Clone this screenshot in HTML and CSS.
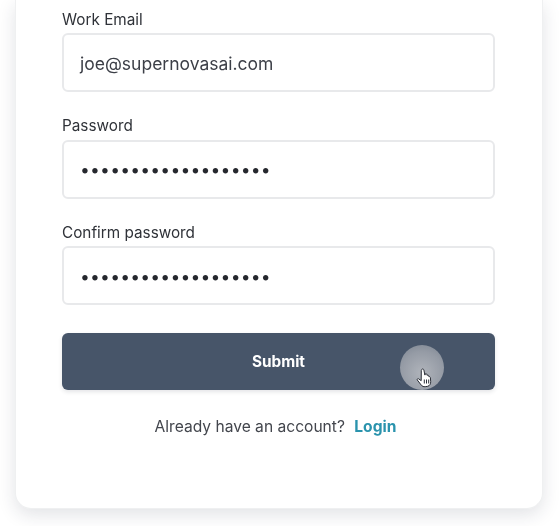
FILE: index.html
```html
<!DOCTYPE html>
<html lang="en">
<head>
<meta charset="utf-8">
<title>Sign up</title>
<link rel="stylesheet" href="styles.css">
</head>
<body>
<main class="page">
  <form class="card">
    <div class="field">
      <label class="label">Work Email</label>
      <div class="input">joe@supernovasai.com</div>
    </div>
    <div class="field">
      <label class="label">Password</label>
      <div class="input dots">•••••••••••••••••••</div>
    </div>
    <div class="field">
      <label class="label">Confirm password</label>
      <div class="input dots">•••••••••••••••••••</div>
    </div>
    <div class="submit">
      <span>Submit</span>
      <span class="cursor">
        <svg class="hand" width="18" height="22" viewBox="0 0 18 22">
          <path d="M6 2.2c.8-.6 1.700 0 1.900.9l1 5 .3-1.200c.7-.5 1.500-.2 1.700.6l.2.9c.6-.5 1.500-.2 1.700.6l.1.7c.7-.3 1.400.1 1.500.9l.3 4c.1 2.200-1 4.200-3 4.700l-2.500.4c-1.700.2-3-.4-4-1.700L1.300 13c-.5-.8.4-1.700 1.300-1.200l2.600 1.900L5.300 3.500c0-.6.2-1 .7-1.300z" fill="#fff" stroke="#2b2f38" stroke-width="1"/>
          <path d="M8.300 12.500v4M10.500 12.500v4M12.700 12.500v4" stroke="#2b2f38" stroke-width="1" fill="none"/>
        </svg>
      </span>
    </div>
    <p class="foot">Already have an account? <a class="login">Login</a></p>
  </form>
</main>
</body>
</html>
```
FILE: styles.css
```css
* { box-sizing: border-box; }
html, body { margin: 0; height: 526px; overflow: hidden; background: #fff; }
body { font-family: Inter, "Liberation Sans", sans-serif; color: #363a42; }
.page { padding: 0 17px 0 15px; height: 526px; }
.card {
  height: 509px;
  padding: 9.500px 47px 0 46px;
  background: #fff;
  border: 1px solid #eff0f1;
  border-top: none;
  border-radius: 0 0 16px 16px;
  box-shadow: 0 6px 18px rgba(30, 40, 60, 0.13);
  filter: blur(0.35px);
}
.field { margin-bottom: 20px; height: 86.500px; }
.label { display: block; font-size: 15.300px; line-height: 20px; margin-bottom: 3.500px; color: #2f3238; }
.input {
  height: 59px;
  padding: 1px 16px 0;
  display: flex;
  align-items: center;
  border: 2px solid #e8e9eb;
  border-radius: 6px;
  font-size: 17.500px;
  color: #3c3f47;
}
.dots { font-size: 17.500px; letter-spacing: 0.2px; color: #25272d; }
.submit {
  position: relative;
  margin-top: 24px;
  height: 57px;
  display: flex;
  align-items: center;
  justify-content: center;
  background: #475569;
  border-radius: 6px;
  color: #fff;
  font-size: 15.300px;
  font-weight: 700;
  box-shadow: 0 2px 4px rgba(30, 40, 60, 0.12);
}
.cursor {
  position: absolute;
  left: 338px;
  top: 12px;
  width: 44px;
  height: 45px;
  border-radius: 50%;
  background: radial-gradient(circle at 50% 62%, #b0b4bb 0%, #959ba5 60%, #79828f 100%);
}
.hand { position: absolute; left: 16px; top: 22px; }
.foot { margin: 27px 0 0; padding-right: 6px; text-align: center; font-size: 15.600px; line-height: 20px; color: #43464d; }
.login { margin-left: 5px; font-weight: 700; color: #2a93ad; }
```
